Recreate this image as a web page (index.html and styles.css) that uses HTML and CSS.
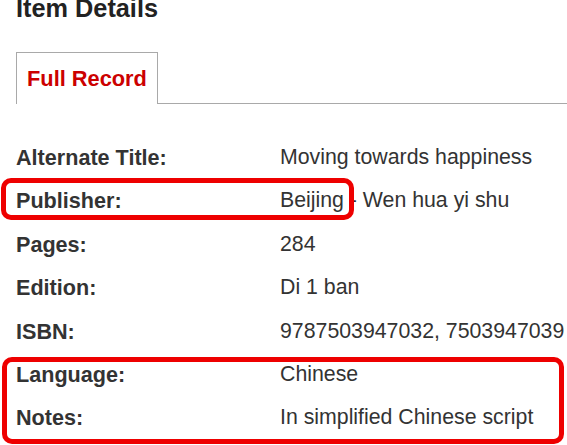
FILE: index.html
```html
<!DOCTYPE html>
<html lang="en">
<head>
<meta charset="utf-8">
<title>Item Details</title>
<link rel="stylesheet" href="styles.css">
</head>
<body>
<div class="page">
  <h1 class="title">Item Details</h1>
  <div class="tabs">
    <div class="tab">Full Record</div>
    <div class="tab-fill"></div>
  </div>
  <dl class="record">
    <dt>Alternate Title:</dt><dd>Moving towards happiness</dd>
    <dt>Publisher:</dt><dd>Beijing - Wen hua yi shu</dd>
    <dt>Pages:</dt><dd>284</dd>
    <dt>Edition:</dt><dd>Di 1 ban</dd>
    <dt>ISBN:</dt><dd>9787503947032, 7503947039</dd>
    <dt>Language:</dt><dd>Chinese</dd>
    <dt>Notes:</dt><dd>In simplified Chinese script</dd>
  </dl>
  <div class="mark mark-publisher"></div>
  <div class="mark mark-language"></div>
</div>
</body>
</html>
```
FILE: styles.css
```css
html, body {
  margin: 0;
  padding: 0;
  background: #ffffff;
}
.page {
  position: relative;
  width: 567px;
  height: 445px;
  overflow: hidden;
  font-family: "Liberation Sans", Arial, sans-serif;
  color: #333333;
}
.title {
  margin: 0 0 36px 0;
  padding-left: 16px;
  font-size: 25.3px;
  line-height: 16px;
  font-weight: bold;
  color: #222222;
}
.tabs {
  display: flex;
  align-items: flex-end;
  padding-left: 16px;
  height: 52px;
}
.tab {
  box-sizing: border-box;
  width: 142px;
  height: 52px;
  padding: 0 10px;
  border: 1px solid #a9a9a9;
  border-bottom: none;
  font-size: 21.8px;
  line-height: 51px;
  font-weight: bold;
  color: #cc0000;
  white-space: nowrap;
}
.tab-fill {
  flex: 1;
  height: 0;
  border-bottom: 1px solid #a9a9a9;
}
.record {
  display: grid;
  grid-template-columns: 264px 1fr;
  margin: 32px 0 0 0;
  padding-left: 16px;
  font-size: 21.6px;
  line-height: 43.4px;
}
.record dt {
  font-weight: bold;
  color: #333333;
}
.record dd {
  margin: 0;
  font-size: 21.3px;
  color: #333333;
  white-space: nowrap;
}
.mark {
  position: absolute;
  box-sizing: border-box;
  border: 5px solid #ee0000;
  border-radius: 10px;
}
.mark-publisher {
  left: 1px;
  top: 178px;
  width: 353px;
  height: 42px;
}
.mark-language {
  left: 2px;
  top: 357px;
  width: 562px;
  height: 87px;
}
```
